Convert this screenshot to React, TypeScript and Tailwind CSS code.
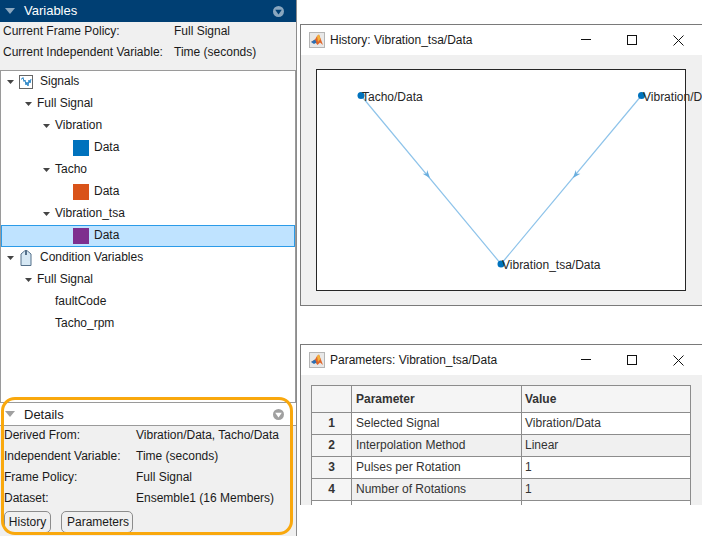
const font = { fontFamily: '"Liberation Sans", Arial, sans-serif' };

function Caret({ light }: { light?: boolean }) {
  return (
    <svg width="7" height="4" viewBox="0 0 7 4" className="shrink-0">
      <path d="M0 0H7L3.5 4Z" fill={light ? '#9a9a9a' : '#444444'} />
    </svg>
  );
}

function PanelChevron({ fill, arrow }: { fill: string; arrow: string }) {
  return (
    <svg width="11" height="11" viewBox="0 0 11 11">
      <circle cx="5.5" cy="5.5" r="5.5" fill={fill} />
      <path d="M2.2 3.8H8.8L5.5 8.4Z" fill={arrow} />
    </svg>
  );
}

function SignalIcon() {
  return (
    <svg width="14" height="14" viewBox="0 0 14 14" className="shrink-0">
      <rect x="0.5" y="0.5" width="13" height="13" fill="#fff" stroke="#666" />
      <path d="M2 4H3L4 2.5L5 6.5L6 5L7 10L8 7L9 11L10 5L11 8L12 4" fill="none" stroke="#2a86c8" strokeWidth="1" />
    </svg>
  );
}

function TagIcon() {
  return (
    <svg width="12" height="16" viewBox="0 0 12 16" className="shrink-0">
      <path d="M1 4L4.5 1H7.5L11 4V15.5H1Z" fill="#d6e8f4" stroke="#54708a" />
      <rect x="5" y="0" width="2" height="5" fill="#54708a" />
    </svg>
  );
}

function MatlabIcon() {
  return (
    <div className="w-4 h-4 border border-[#b5b5b5] bg-[#e8e8e8] flex items-center justify-center shrink-0">
      <svg width="14" height="14" viewBox="0 0 14 14">
        <path d="M1 9L5 6.5L7 3L9 1.5L13 12L10 9.5L7.5 12L5 9Z" fill="#e0662a" />
        <path d="M1 9L5 6.5L6.5 9.5L4 11Z" fill="#2a6fb5" />
        <path d="M7 3L9 1.5L10.5 6L8 9Z" fill="#f3b23c" />
      </svg>
    </div>
  );
}

type TreeRowProps = {
  indent: string;
  label: string;
  caret?: boolean;
  icon?: React.ReactNode;
  swatch?: string;
  selected?: boolean;
};

function TreeRow({ indent, label, caret, icon, swatch, selected }: TreeRowProps) {
  return (
    <div className={`h-[22px] flex items-center ${indent} ${selected ? 'bg-[#bfe3ff] outline outline-1 -outline-offset-1 outline-[#2b9be8]' : ''}`}>
      {caret && <span className="mr-[5px]"><Caret /></span>}
      {icon}
      {swatch && <div className={`w-4 h-4 mr-[5px] ${swatch}`} />}
      <span className="pb-[2px]">{label}</span>
    </div>
  );
}

function InfoRow({ label, value, col }: { label: string; value: string; col: string }) {
  return (
    <div className="h-[21px] flex items-start leading-[19px]">
      <span className={col}>{label}</span>
      <span>{value}</span>
    </div>
  );
}

function WindowBar({ title }: { title: string }) {
  return (
    <div className="h-[30px] bg-white flex items-center pl-[8px] shrink-0">
      <MatlabIcon />
      <span className="ml-[5px] flex-1">{title}</span>
      <svg width="12" height="2" viewBox="0 0 12 2" className="mr-[34px]">
        <rect width="10" height="1" fill="#111" />
      </svg>
      <svg width="10" height="10" viewBox="0 0 10 10" className="mr-[36px]">
        <rect x="0.5" y="0.5" width="9" height="9" fill="none" stroke="#111" />
      </svg>
      <svg width="11" height="11" viewBox="0 0 11 11" className="mr-[18px]">
        <path d="M0.5 0.5L10.5 10.5M10.5 0.5L0.5 10.5" stroke="#111" />
      </svg>
    </div>
  );
}

function HistoryGraph() {
  return (
    <svg width="401" height="250" viewBox="0 0 401 250" className="block shrink-0">
      <rect x="15.5" y="14.5" width="369" height="221" fill="#fff" stroke="#262626" />
      <path d="M60 40.5L200 209M340.5 40.5L200 209" stroke="#8fc4ea" strokeWidth="1.2" fill="none" />
      <path d="M129 123L126.2 114.9L125.5 118.8L121.6 118.7Z" fill="#6aaede" />
      <path d="M272 123L274.8 114.9L275.5 118.8L279.4 118.7Z" fill="#6aaede" />
      <circle cx="60" cy="40.5" r="3.5" fill="#0072bd" />
      <circle cx="340.5" cy="40.5" r="3.5" fill="#0072bd" />
      <circle cx="200" cy="209" r="3.5" fill="#0072bd" />
      <g fontSize="12" fill="#262626">
        <text x="61" y="46">Tacho/Data</text>
        <text x="342" y="46">Vibration/Data</text>
        <text x="201" y="214">Vibration_tsa/Data</text>
      </g>
    </svg>
  );
}

const paramRows = [
  ['1', 'Selected Signal', 'Vibration/Data', 'bg-white'],
  ['2', 'Interpolation Method', 'Linear', 'bg-[#f0f0f0]'],
  ['3', 'Pulses per Rotation', '1', 'bg-white'],
  ['4', 'Number of Rotations', '1', 'bg-[#f0f0f0]'],
];

export default function App() {
  return (
    <div className="relative w-[702px] h-[536px] bg-white overflow-hidden flex text-[12px] text-[#1a1a1a]" style={font}>
      {/* left panel */}
      <div className="w-[297px] h-full flex flex-col bg-[#f0f0f0] border-r border-[#8c8c8c] shrink-0">
        <div className="h-[22px] bg-[#003f73] flex items-center text-white font-normal shrink-0">
          <span className="ml-[5px] mr-[9px]">
            <svg width="10" height="6" viewBox="0 0 10 6" className="block"><path d="M0 0H10L5 6Z" fill="#8aa7bf" /></svg>
          </span>
          <span className="text-[13px] flex-1">Variables</span>
          <span className="mr-[12px] flex"><PanelChevron fill="#8aa7bf" arrow="#003f73" /></span>
        </div>
        <div className="h-[48px] pl-[3px] shrink-0">
          <InfoRow label="Current Frame Policy:" value="Full Signal" col="w-[171px]" />
          <InfoRow label="Current Independent Variable:" value="Time (seconds)" col="w-[171px]" />
        </div>
        <div className="flex-1 bg-white border border-[#9a9a9a] min-h-0">
          <TreeRow indent="pl-[6px]" label="Signals" caret icon={<span className="mr-[7px] flex"><SignalIcon /></span>} />
          <TreeRow indent="pl-[24px]" label="Full Signal" caret />
          <TreeRow indent="pl-[42px]" label="Vibration" caret />
          <TreeRow indent="pl-[72px]" label="Data" swatch="bg-[#0072bd]" />
          <TreeRow indent="pl-[42px]" label="Tacho" caret />
          <TreeRow indent="pl-[72px]" label="Data" swatch="bg-[#d95319]" />
          <TreeRow indent="pl-[42px]" label="Vibration_tsa" caret />
          <TreeRow indent="pl-[72px]" label="Data" swatch="bg-[#7e2f8e]" selected />
          <TreeRow indent="pl-[6px]" label="Condition Variables" caret icon={<span className="mr-[8px] ml-[1px] flex"><TagIcon /></span>} />
          <TreeRow indent="pl-[24px]" label="Full Signal" caret />
          <TreeRow indent="pl-[54px]" label="faultCode" />
          <TreeRow indent="pl-[54px]" label="Tacho_rpm" />
        </div>
        <div className="h-[23px] bg-white border-b border-[#9a9a9a] flex items-center shrink-0">
          <span className="ml-[5px] mr-[9px]">
            <svg width="10" height="6" viewBox="0 0 10 6" className="block"><path d="M0 0H10L5 6Z" fill="#a0a0a0" /></svg>
          </span>
          <span className="text-[13px] flex-1 pt-[2px]">Details</span>
          <span className="mr-[12px] flex"><PanelChevron fill="#a0a0a0" arrow="#ffffff" /></span>
        </div>
        <div className="h-[110px] pl-[4px] shrink-0">
          <InfoRow label="Derived From:" value="Vibration/Data, Tacho/Data" col="w-[132px]" />
          <InfoRow label="Independent Variable:" value="Time (seconds)" col="w-[132px]" />
          <InfoRow label="Frame Policy:" value="Full Signal" col="w-[132px]" />
          <InfoRow label="Dataset:" value="Ensemble1 (16 Members)" col="w-[132px]" />
          <div className="flex gap-[10px] mt-[1px]">
            <button className="h-[22px] w-[47px] border border-[#8c8c8c] rounded-[5px] bg-[#f0f0f0] pb-[1px]">History</button>
            <button className="h-[22px] w-[72px] border border-[#8c8c8c] rounded-[5px] bg-[#f0f0f0] pb-[1px] pl-[2px]">Parameters</button>
          </div>
        </div>
      </div>

      {/* right column with the two windows */}
      <div className="flex-1 pl-[3px] pt-[24px] flex flex-col min-w-0">
        <div className="h-[282px] border border-[#7a7a7a] border-r-0 bg-[#f0f0f0] flex flex-col overflow-hidden">
          <WindowBar title="History: Vibration_tsa/Data" />
          <HistoryGraph />
        </div>
        <div className="mt-[38px] h-[161px] border border-b-0 border-r-0 border-[#7a7a7a] bg-[#f0f0f0] flex flex-col overflow-hidden">
          <WindowBar title="Parameters: Vibration_tsa/Data" />
          <div className="pl-[10px] pt-[10px]">
            <div className="w-[380px] border border-b-0 border-[#8c8c8c] text-[#333]">
              <div className="h-[27px] flex font-bold border-b border-[#8c8c8c] bg-[#f5f5f5]">
                <div className="w-[40px] border-r border-[#8c8c8c]" />
                <div className="w-[170px] border-r border-[#8c8c8c] pl-[4px] flex items-center">Parameter</div>
                <div className="flex-1 pl-[3px] flex items-center">Value</div>
              </div>
              {paramRows.map(([n, p, v, bg]) => (
                <div key={n} className={`h-[22px] flex border-b border-[#8c8c8c] ${bg}`}>
                  <div className="w-[40px] border-r border-[#8c8c8c] bg-[#f5f5f5] flex items-center justify-center font-bold pb-[1px]">{n}</div>
                  <div className="w-[170px] border-r border-[#8c8c8c] pl-[4px] flex items-center pb-[1px]">{p}</div>
                  <div className="flex-1 pl-[3px] flex items-center pb-[1px]">{v}</div>
                </div>
              ))}
              <div className="h-[6px] flex bg-white">
                <div className="w-[40px] border-r border-[#8c8c8c]" />
                <div className="w-[170px] border-r border-[#8c8c8c]" />
              </div>
            </div>
          </div>
        </div>
      </div>

      {/* orange callout round the Details panel */}
      <div className="absolute left-[1px] top-[397px] w-[292px] h-[138px] border-[3px] border-[#f9a80d] rounded-[14px] pointer-events-none" />
    </div>
  );
}
